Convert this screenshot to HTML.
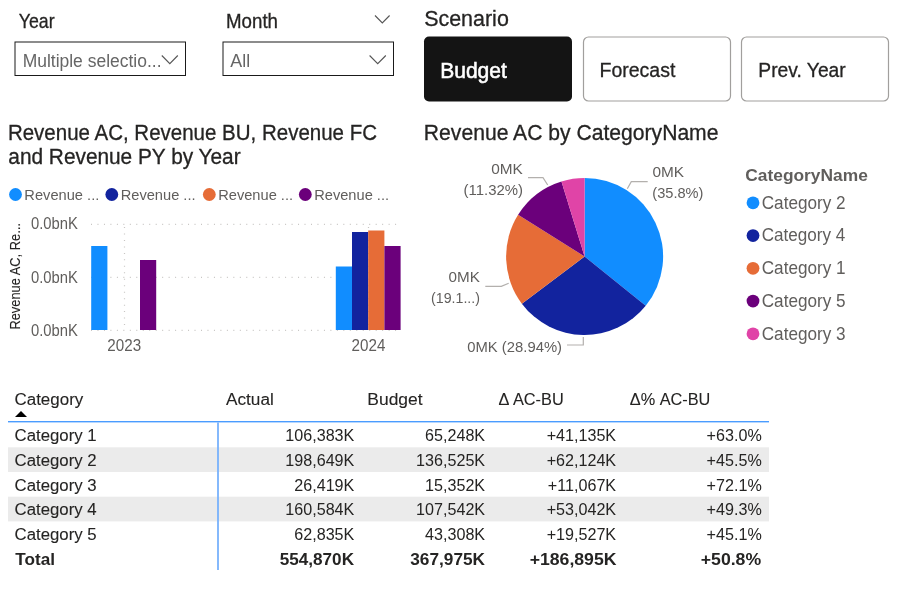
<!DOCTYPE html>
<html><head><meta charset="utf-8"><style>
html,body{margin:0;padding:0;background:#fff;width:900px;height:592px;overflow:hidden}
svg{display:block;font-family:"Liberation Sans",sans-serif;will-change:transform}
</style></head><body>
<svg width="900" height="592" viewBox="0 0 900 592">
<rect x="15" y="42" width="170.5" height="33.5" fill="#fff" stroke="#1a1a1a" stroke-width="1"/>
<polyline points="161.8,55.5 169.8,63.6 177.8,55.5" fill="none" stroke="#555" stroke-width="1.1"/>
<polyline points="375,15.5 382.3,23 389.6,15.5" fill="none" stroke="#555" stroke-width="1.1"/>
<rect x="223" y="42" width="170.5" height="33.5" fill="#fff" stroke="#1a1a1a" stroke-width="1"/>
<polyline points="369.6,55.5 377.7,63.6 385.8,55.5" fill="none" stroke="#555" stroke-width="1.1"/>
<rect x="424" y="36.5" width="148" height="65" rx="5" fill="#141414"/>
<rect x="583.5" y="37" width="147" height="64" rx="5" fill="#fff" stroke="#a19f9d" stroke-width="1.2"/>
<rect x="741.5" y="37" width="147" height="64" rx="5" fill="#fff" stroke="#a19f9d" stroke-width="1.2"/>
<circle cx="15.5" cy="194.5" r="6.4" fill="#118DFF"/>
<circle cx="111.8" cy="194.5" r="6.4" fill="#12239E"/>
<circle cx="209.3" cy="194.5" r="6.4" fill="#E66C37"/>
<circle cx="305.3" cy="194.5" r="6.4" fill="#6B007B"/>
<line x1="91" y1="224.3" x2="399" y2="224.3" stroke="#c8c6c4" stroke-width="1.2" stroke-dasharray="1 5.47"/>
<line x1="91" y1="277.3" x2="399" y2="277.3" stroke="#c8c6c4" stroke-width="1.2" stroke-dasharray="1 5.47"/>
<line x1="91" y1="330.3" x2="399" y2="330.3" stroke="#c8c6c4" stroke-width="1.2" stroke-dasharray="1 5.47"/>
<line x1="124.5" y1="227" x2="124.5" y2="330" stroke="#c8c6c4" stroke-width="1.2" stroke-dasharray="1 5.47"/>
<line x1="368.5" y1="227" x2="368.5" y2="330" stroke="#c8c6c4" stroke-width="1.2" stroke-dasharray="1 5.47"/>
<rect x="91.2" y="246" width="16.2" height="84" fill="#118DFF"/>
<rect x="140.0" y="260" width="16.2" height="70" fill="#6B007B"/>
<rect x="335.8" y="266.5" width="16.2" height="63.5" fill="#118DFF"/>
<rect x="352.0" y="232" width="16.2" height="98" fill="#12239E"/>
<rect x="368.2" y="230.5" width="16.2" height="99.5" fill="#E66C37"/>
<rect x="384.4" y="246" width="16.2" height="84" fill="#6B007B"/>
<path d="M584.6,256.5 L584.60,178.00 A78.5,78.5 0 0 1 645.71,305.78 Z" fill="#118DFF" />
<path d="M584.6,256.5 L645.71,305.78 A78.5,78.5 0 0 1 521.85,303.67 Z" fill="#12239E" />
<path d="M584.6,256.5 L521.85,303.67 A78.5,78.5 0 0 1 518.10,214.79 Z" fill="#E66C37" />
<path d="M584.6,256.5 L518.10,214.79 A78.5,78.5 0 0 1 561.46,181.49 Z" fill="#6B007B" />
<path d="M584.6,256.5 L561.46,181.49 A78.5,78.5 0 0 1 584.60,178.00 Z" fill="#E044A7" />
<polyline points="528,177.7 543,177.7 547.7,185" fill="none" stroke="#b3b0ad" stroke-width="1.2"/>
<polyline points="647.7,181.6 631.3,181.6 627.3,188.7" fill="none" stroke="#b3b0ad" stroke-width="1.2"/>
<polyline points="485.3,286.4 501.3,286.4 508.7,283.3" fill="none" stroke="#b3b0ad" stroke-width="1.2"/>
<polyline points="567,345 583.3,345 583.3,337" fill="none" stroke="#b3b0ad" stroke-width="1.2"/>
<circle cx="753" cy="202.80" r="6.4" fill="#118DFF"/>
<circle cx="753" cy="235.55" r="6.4" fill="#12239E"/>
<circle cx="753" cy="268.30" r="6.4" fill="#E66C37"/>
<circle cx="753" cy="301.05" r="6.4" fill="#6B007B"/>
<circle cx="753" cy="333.80" r="6.4" fill="#E044A7"/>
<rect x="8" y="447.3" width="761" height="24.7" fill="#ebebeb"/>
<rect x="8" y="496.7" width="761" height="24.7" fill="#ebebeb"/>
<rect x="8" y="421" width="761" height="1.4" fill="#4a9cff"/>
<rect x="217.1" y="422.4" width="1.8" height="147.6" fill="#78b2fc"/>
<path d="M15,417 L21,411 L27,417 Z" fill="#000"/>
<text transform="translate(18.72,28.00) scale(0.9046,1)" font-size="19.62" fill="#252423" stroke="#252423" stroke-width="0.3">Year</text>
<text transform="translate(22.63,67.00) scale(1.0023,1)" font-size="17.44" fill="#666">Multiple selectio...</text>
<text transform="translate(226.04,28.00) scale(0.9681,1)" font-size="19.33" fill="#252423" stroke="#252423" stroke-width="0.3">Month</text>
<text transform="translate(230.30,67.00) scale(1.0087,1)" font-size="17.73" fill="#666">All</text>
<text transform="translate(424.13,25.50) scale(0.9655,1)" font-size="22.24" fill="#252423" stroke="#252423" stroke-width="0.3">Scenario</text>
<text transform="translate(440.15,77.50) scale(0.9663,1)" font-size="21.80" fill="#fff" stroke="#fff" stroke-width="0.55">Budget</text>
<text transform="translate(599.47,77.20) scale(0.9329,1)" font-size="20.93" fill="#252423" stroke="#252423" stroke-width="0.3">Forecast</text>
<text transform="translate(758.30,77.00) scale(0.9333,1)" font-size="20.64" fill="#252423" stroke="#252423" stroke-width="0.3">Prev. Year</text>
<text transform="translate(7.90,139.80) scale(0.9537,1)" font-size="21.51" fill="#252423" stroke="#252423" stroke-width="0.3">Revenue AC, Revenue BU, Revenue FC</text>
<text transform="translate(8.35,164.00) scale(0.9687,1)" font-size="21.51" fill="#252423" stroke="#252423" stroke-width="0.3">and Revenue PY by Year</text>
<text transform="translate(24.35,200.00) scale(0.9605,1)" font-size="15.26" fill="#605E5C">Revenue ...</text>
<text transform="translate(120.65,200.00) scale(0.9605,1)" font-size="15.26" fill="#605E5C">Revenue ...</text>
<text transform="translate(218.15,200.00) scale(0.9605,1)" font-size="15.26" fill="#605E5C">Revenue ...</text>
<text transform="translate(314.15,200.00) scale(0.9605,1)" font-size="15.26" fill="#605E5C">Revenue ...</text>
<text transform="translate(31.04,229.00) scale(0.9260,1)" font-size="15.99" fill="#605E5C">0.0bnK</text>
<text transform="translate(31.04,282.50) scale(0.9260,1)" font-size="15.99" fill="#605E5C">0.0bnK</text>
<text transform="translate(31.04,335.50) scale(0.9260,1)" font-size="15.99" fill="#605E5C">0.0bnK</text>
<text transform="translate(20.30,329.61) rotate(-90) scale(0.8852,1)" font-size="14.53" fill="#252423" stroke="#252423" stroke-width="0.1">Revenue AC, Re...</text>
<text transform="translate(107.29,350.80) scale(0.9511,1)" font-size="15.99" fill="#605E5C">2023</text>
<text transform="translate(351.59,350.80) scale(0.9500,1)" font-size="15.99" fill="#605E5C">2024</text>
<text transform="translate(423.85,140.00) scale(0.9693,1)" font-size="21.80" fill="#252423" stroke="#252423" stroke-width="0.3">Revenue AC by CategoryName</text>
<text transform="translate(491.22,174.00) scale(0.9896,1)" font-size="15.55" fill="#605E5C">0MK</text>
<text transform="translate(463.60,195.00) scale(0.9600,1)" font-size="15.55" fill="#605E5C">(11.32%)</text>
<text transform="translate(652.42,177.30) scale(0.9896,1)" font-size="15.55" fill="#605E5C">0MK</text>
<text transform="translate(652.32,197.70) scale(0.9391,1)" font-size="15.55" fill="#605E5C">(35.8%)</text>
<text transform="translate(448.52,282.40) scale(0.9801,1)" font-size="15.55" fill="#605E5C">0MK</text>
<text transform="translate(431.03,303.30) scale(0.9144,1)" font-size="15.55" fill="#605E5C">(19.1...)</text>
<text transform="translate(467.24,351.60) scale(0.9540,1)" font-size="15.55" fill="#605E5C">0MK (28.94%)</text>
<text transform="translate(745.26,181.30) scale(1.0582,1)" font-size="16.42" fill="#605E5C" font-weight="bold">CategoryName</text>
<text transform="translate(761.70,208.70) scale(0.9846,1)" font-size="17.44" fill="#605E5C">Category 2</text>
<text transform="translate(761.70,241.45) scale(0.9814,1)" font-size="17.44" fill="#605E5C">Category 4</text>
<text transform="translate(761.70,274.20) scale(0.9846,1)" font-size="17.44" fill="#605E5C">Category 1</text>
<text transform="translate(761.70,306.95) scale(0.9846,1)" font-size="17.44" fill="#605E5C">Category 5</text>
<text transform="translate(761.70,339.70) scale(0.9846,1)" font-size="17.44" fill="#605E5C">Category 3</text>
<text transform="translate(14.51,404.70) scale(1.0056,1)" font-size="16.86" fill="#252423" stroke="#252423" stroke-width="0.1">Category</text>
<text transform="translate(226.00,404.70) scale(1.0208,1)" font-size="16.86" fill="#252423" stroke="#252423" stroke-width="0.1">Actual</text>
<text transform="translate(367.34,404.70) scale(1.0349,1)" font-size="16.86" fill="#252423" stroke="#252423" stroke-width="0.1">Budget</text>
<text transform="translate(498.44,404.70) scale(0.9682,1)" font-size="16.86" fill="#252423" stroke="#252423" stroke-width="0.1">Δ AC-BU</text>
<text transform="translate(629.75,404.70) scale(0.9668,1)" font-size="16.86" fill="#252423" stroke="#252423" stroke-width="0.1">Δ% AC-BU</text>
<text transform="translate(14.51,441.30) scale(0.9878,1)" font-size="17.01" fill="#252423" stroke="#252423" stroke-width="0.1">Category 1</text>
<text transform="translate(285.29,441.30) scale(0.9487,1)" font-size="17.01" fill="#252423">106,383K</text>
<text transform="translate(425.06,441.30) scale(0.9487,1)" font-size="17.01" fill="#252423">65,248K</text>
<text transform="translate(546.64,441.30) scale(0.9487,1)" font-size="17.01" fill="#252423">+41,135K</text>
<text transform="translate(706.61,441.30) scale(0.9487,1)" font-size="17.01" fill="#252423">+63.0%</text>
<text transform="translate(14.51,466.00) scale(0.9878,1)" font-size="17.01" fill="#252423" stroke="#252423" stroke-width="0.1">Category 2</text>
<text transform="translate(285.29,466.00) scale(0.9487,1)" font-size="17.01" fill="#252423">198,649K</text>
<text transform="translate(416.09,466.00) scale(0.9487,1)" font-size="17.01" fill="#252423">136,525K</text>
<text transform="translate(546.64,466.00) scale(0.9487,1)" font-size="17.01" fill="#252423">+62,124K</text>
<text transform="translate(706.61,466.00) scale(0.9487,1)" font-size="17.01" fill="#252423">+45.5%</text>
<text transform="translate(14.51,490.70) scale(0.9878,1)" font-size="17.01" fill="#252423" stroke="#252423" stroke-width="0.1">Category 3</text>
<text transform="translate(294.26,490.70) scale(0.9487,1)" font-size="17.01" fill="#252423">26,419K</text>
<text transform="translate(425.06,490.70) scale(0.9487,1)" font-size="17.01" fill="#252423">15,352K</text>
<text transform="translate(547.84,490.70) scale(0.9487,1)" font-size="17.01" fill="#252423">+11,067K</text>
<text transform="translate(706.61,490.70) scale(0.9487,1)" font-size="17.01" fill="#252423">+72.1%</text>
<text transform="translate(14.51,515.40) scale(0.9878,1)" font-size="17.01" fill="#252423" stroke="#252423" stroke-width="0.1">Category 4</text>
<text transform="translate(285.29,515.40) scale(0.9487,1)" font-size="17.01" fill="#252423">160,584K</text>
<text transform="translate(416.09,515.40) scale(0.9487,1)" font-size="17.01" fill="#252423">107,542K</text>
<text transform="translate(546.64,515.40) scale(0.9487,1)" font-size="17.01" fill="#252423">+53,042K</text>
<text transform="translate(706.61,515.40) scale(0.9487,1)" font-size="17.01" fill="#252423">+49.3%</text>
<text transform="translate(14.51,540.10) scale(0.9878,1)" font-size="17.01" fill="#252423" stroke="#252423" stroke-width="0.1">Category 5</text>
<text transform="translate(294.26,540.10) scale(0.9487,1)" font-size="17.01" fill="#252423">62,835K</text>
<text transform="translate(425.06,540.10) scale(0.9487,1)" font-size="17.01" fill="#252423">43,308K</text>
<text transform="translate(546.64,540.10) scale(0.9487,1)" font-size="17.01" fill="#252423">+19,527K</text>
<text transform="translate(706.61,540.10) scale(0.9487,1)" font-size="17.01" fill="#252423">+45.1%</text>
<text transform="translate(15.30,564.80) scale(1.0090,1)" font-size="17.01" fill="#252423" font-weight="bold">Total</text>
<text transform="translate(279.73,564.80) scale(1.0078,1)" font-size="17.01" fill="#252423" font-weight="bold">554,870K</text>
<text transform="translate(410.23,564.80) scale(1.0146,1)" font-size="17.01" fill="#252423" font-weight="bold">367,975K</text>
<text transform="translate(529.65,564.80) scale(1.0374,1)" font-size="17.01" fill="#252423" font-weight="bold">+186,895K</text>
<text transform="translate(700.75,564.80) scale(1.0387,1)" font-size="17.01" fill="#252423" font-weight="bold">+50.8%</text>
</svg>
</body></html>
